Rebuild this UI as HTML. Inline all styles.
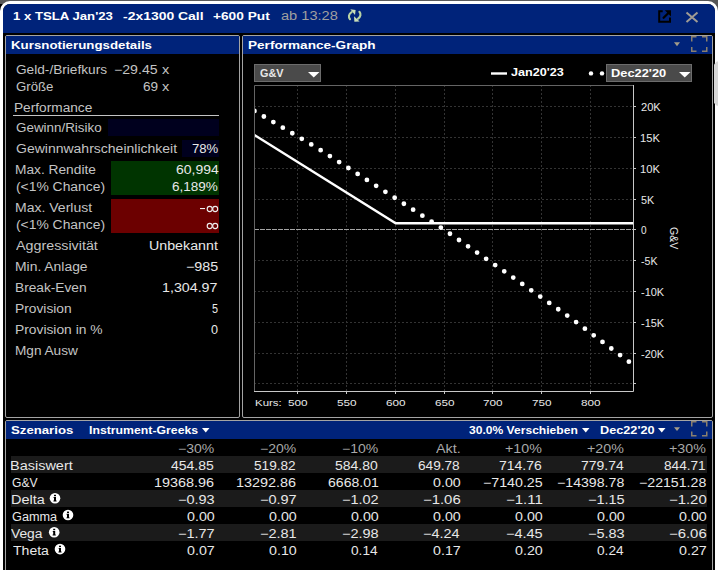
<!DOCTYPE html>
<html><head><meta charset="utf-8">
<style>
html,body{margin:0;padding:0;width:718px;height:570px;overflow:hidden;background:#000;}
.a{position:absolute;box-sizing:border-box;}
.t{position:absolute;white-space:pre;transform-origin:0 0;}
.panel{position:absolute;box-sizing:border-box;border:1px solid #a4a4a4;border-radius:2px;background:#000;}
.hdr{position:absolute;left:0;top:0;right:0;height:18px;background:#00237a;}
</style></head><body>
<div class=a style="left:0;top:0;width:718px;height:4px;background:#5a5a5a"></div>
<div class=a style="left:704px;top:0;width:14px;height:14px;background:#555"></div>
<div class=a style="left:0;top:1px;width:718px;height:620px;border:3px solid #fff;border-radius:10px 10px 0 0;background:#000"></div>
<div class=a style="left:3px;top:4px;width:712px;height:29px;background:#00237a;border-radius:7px 7px 0 0"></div>

<!-- panels -->
<div class=panel style="left:5px;top:35px;width:235px;height:383px"><div class=hdr></div></div>
<div class=panel style="left:242px;top:35px;width:471px;height:383px"><div class=hdr></div></div>
<div class=panel style="left:5px;top:420px;width:708px;height:200px"><div class=hdr></div></div>

<!-- left panel boxes -->
<div class=a style="left:13px;top:115px;width:206px;height:1px;background:#c4c4c4"></div>
<div class=a style="left:108px;top:119px;width:111px;height:17px;background:#00001e"></div>
<div class=a style="left:182px;top:140px;width:37px;height:17px;background:#00001e"></div>
<div class=a style="left:111px;top:161px;width:108px;height:34px;background:#003400"></div>
<div class=a style="left:111px;top:199px;width:108px;height:34px;background:#6c0000"></div>

<!-- dropdowns -->
<div class=a style="left:254px;top:64px;width:67px;height:18px;background:#4a4a4a;border:1px solid #6c6c6c"></div>
<div class=a style="left:606px;top:64px;width:86px;height:18px;background:#4a4a4a;border:1px solid #6c6c6c"></div>

<!-- table stripes -->
<div class=a style="left:11px;top:456px;width:696px;height:17px;background:#1b1b1b"></div>
<div class=a style="left:11px;top:490px;width:696px;height:17px;background:#1b1b1b"></div>
<div class=a style="left:11px;top:524px;width:696px;height:17px;background:#1b1b1b"></div>

<div class=a style="left:84px;top:438px;width:126px;height:1px;background:#00237a"></div>
<!-- resize grip -->


<svg class=a style="left:0;top:0" width="718" height="570" viewBox="0 0 718 570">
<defs><clipPath id="pc"><rect x="255" y="86" width="378" height="305"/></clipPath></defs>
<g stroke="#333333" stroke-width="1" stroke-dasharray="2 2" fill="none">
<path d="M297.5 85V391M346.5 85V391M395.5 85V391M444.5 85V391M492.5 85V391M541.5 85V391M590.5 85V391"/>
<path d="M254 106.5H633M254 137.5H633M254 168.5H633M254 199.5H633M254 260.5H633M254 291.5H633M254 322.5H633M254 353.5H633M254 383.5H633"/>
</g>
<path d="M254 229.5H633" stroke="#a4a4a4" stroke-width="1" stroke-dasharray="5 1"/>
<path d="M254.5 391V85.5H633" stroke="#646464" stroke-width="1" fill="none"/>
<path d="M633.5 85V391.5H254" stroke="#c8c8c8" stroke-width="1" fill="none"/>
<g stroke="#c8c8c8" stroke-width="1">
<path d="M634 106.5h2M634 137.5h2M634 168.5h2M634 199.5h2M634 229.5h2M634 260.5h2M634 291.5h2M634 322.5h2M634 353.5h2M634 383.5h2"/>
<path d="M297.5 392v2M346.5 392v2M395.5 392v2M444.5 392v2M492.5 392v2M541.5 392v2M590.5 392v2"/>
</g>
<g clip-path="url(#pc)">
<polyline points="254,134.7 395.7,223.3 634,223.3" stroke="#fff" stroke-width="2.4" fill="none"/>
<polyline points="254.4,110.9 316.9,147.75 380.3,188.5 443.8,229.5 507.25,273.4 570.7,318.05 634.2,365.7" stroke="#fff" stroke-width="4.8" stroke-linecap="round" stroke-dasharray="0 11" fill="none"/>
</g>
<polygon points="714,64.5 716.8,61.6 718,61.6 718,105.8 716.8,105.8 714,103" fill="#d8d8d8"/>
<!-- legend -->
<rect x="491" y="72.3" width="16" height="2.4" fill="#fff"/>
<circle cx="591" cy="73.4" r="2.2" fill="#fff"/>
<circle cx="602" cy="73.4" r="2.2" fill="#fff"/>
<!-- dropdown triangles -->
<polygon points="308,72 319.5,72 313.75,77.5" fill="#fff"/>
<polygon points="679,72 690.5,72 684.75,77.5" fill="#fff"/>
<!-- header icons right panel -->
<polygon points="674,42.3 680,42.3 677,46.2" fill="#a39c8a"/>
<path d="M691.75 41.5V36.75H696.5M702 36.75H706.75V41.5M706.75 47V51.25H702M696.5 51.25H691.75V47" stroke="#8a806e" stroke-width="1.5" fill="none"/>
<!-- bottom header icons -->
<polygon points="202,428 209.5,428 205.75,432.5" fill="#fff"/>
<polygon points="582,428 589.5,428 585.75,432.5" fill="#fff"/>
<polygon points="658,428 665.5,428 661.75,432.5" fill="#fff"/>
<polygon points="674,427.3 680,427.3 677,431" fill="#a39c8a"/>
<path d="M691.75 426.5V421.75H696.5M702 421.75H706.75V426.5M706.75 431.5V435.75H702M696.5 435.75H691.75V431.5" stroke="#8a806e" stroke-width="1.5" fill="none"/>
<!-- title icons -->
<path d="M686.5 12.5L697.5 22M697.5 12.5L686.5 22" stroke="#a09c94" stroke-width="2"/>
<path d="M662.7 11.2H659.2V21.8H670V17.5" stroke="#000" stroke-width="2" fill="none"/>
<polygon points="664.8,10.2 671,10.2 671,16.4" fill="#000"/>
<path d="M663.6 17.8L668.2 13.2" stroke="#000" stroke-width="2.3" stroke-linecap="round"/>
<!-- refresh -->
<g fill="none" stroke="#b8d2a4" stroke-width="2.1" stroke-linecap="round">
<path d="M350 19.2C348.3 17.2 348.4 14.2 351.6 12.2"/>
<path d="M359.4 11.8C361.1 13.8 361 16.8 357.8 18.8"/>
</g>
<polygon points="350.3,9.3 355.6,10 355,15" fill="#c8ddb8"/>
<polygon points="354,16.2 354.4,21.7 359.6,21.6" fill="#c8ddb8"/>
<!-- infinity -->
<rect x="200" y="208" width="5" height="1.1" fill="#eee"/>
<g fill="none" stroke="#eee" stroke-width="1.1">
<ellipse cx="209.7" cy="209" rx="2.5" ry="2.6"/><ellipse cx="215.2" cy="209" rx="2.5" ry="2.6"/>
<ellipse cx="209.7" cy="226" rx="2.5" ry="2.6"/><ellipse cx="215.2" cy="226" rx="2.5" ry="2.6"/>
</g>
<!-- info icons -->
<g fill="#fff">
<circle cx="55" cy="498.2" r="5.3"/><circle cx="68" cy="515" r="5.3"/><circle cx="54.2" cy="532.2" r="5.3"/><circle cx="60" cy="549.1" r="5.3"/>
</g>
<g fill="#000">
<rect x="54" y="494.8" width="2" height="1.4"/><path d="M53.6 497H56V500.6H56.6V501.5H53.4V500.6H54V497.9H53.6Z"/>
<rect x="67" y="511.6" width="2" height="1.4"/><path d="M66.6 513.8H69V517.4H69.6V518.3H66.4V517.4H67V514.7H66.6Z"/>
<rect x="53.2" y="528.8" width="2" height="1.4"/><path d="M52.8 531H55.2V534.6H55.8V535.5H52.6V534.6H53.2V531.9H52.8Z"/>
<rect x="59" y="545.7" width="2" height="1.4"/><path d="M58.6 547.9H61V551.5H61.6V552.4H58.4V551.5H59V548.8H58.6Z"/>
</g>
</svg>
<div class=t style='left:12.90px;top:11px;font:700 11px/11px "Liberation Sans",sans-serif;color:#ffffff;transform:scaleX(1.1964)'>1 x TSLA Jan&#x27;23</div>
<div class=t style='left:123.00px;top:11px;font:700 11px/11px "Liberation Sans",sans-serif;color:#ffffff;transform:scaleX(1.2667)'>-2x1300 Call</div>
<div class=t style='left:212.70px;top:11px;font:700 11px/11px "Liberation Sans",sans-serif;color:#ffffff;transform:scaleX(1.2457)'>+600 Put</div>
<div class=t style='left:280.80px;top:10px;font:400 12px/12px "Liberation Sans",sans-serif;color:#a0a0a0;transform:scaleX(1.2170)'>ab 13:28</div>
<div class=t style='left:10.90px;top:40px;font:700 11px/11px "Liberation Sans",sans-serif;color:#ffffff;transform:scaleX(1.2077)'>Kursnotierungsdetails</div>
<div class=t style='left:248.00px;top:40px;font:700 11px/11px "Liberation Sans",sans-serif;color:#ffffff;transform:scaleX(1.2350)'>Performance-Graph</div>
<div class=t style='left:10.90px;top:425px;font:700 11px/11px "Liberation Sans",sans-serif;color:#ffffff;transform:scaleX(1.1981)'>Szenarios</div>
<div class=t style='left:88.90px;top:426px;font:700 10px/10px "Liberation Sans",sans-serif;color:#ffffff;transform:scaleX(1.2270)'>Instrument-Greeks</div>
<div class=t style='left:469.00px;top:426px;font:700 10px/10px "Liberation Sans",sans-serif;color:#ffffff;transform:scaleX(1.2078)'>30.0% Verschieben</div>
<div class=t style='left:599.70px;top:426px;font:700 10px/10px "Liberation Sans",sans-serif;color:#ffffff;transform:scaleX(1.2698)'>Dec22&#x27;20</div>
<div class=t style='left:16.00px;top:64px;font:400 12px/12px "Liberation Sans",sans-serif;color:#c4c4c4;transform:scaleX(1.1375)'>Geld-/Briefkurs</div>
<div class=t style='left:113.82px;top:64px;font:400 12px/12px "Liberation Sans",sans-serif;color:#c4c4c4;transform:scaleX(1.1778)'>−29.45</div>
<div class=t style='left:162.40px;top:64px;font:400 12px/12px "Liberation Sans",sans-serif;color:#c4c4c4;transform:scaleX(1.2133)'>x</div>
<div class=t style='left:16.00px;top:81px;font:400 12px/12px "Liberation Sans",sans-serif;color:#c4c4c4;transform:scaleX(1.1012)'>Größe</div>
<div class=t style='left:142.70px;top:81px;font:400 12px/12px "Liberation Sans",sans-serif;color:#c4c4c4;transform:scaleX(1.1308)'>69</div>
<div class=t style='left:162.40px;top:81px;font:400 12px/12px "Liberation Sans",sans-serif;color:#c4c4c4;transform:scaleX(1.2133)'>x</div>
<div class=t style='left:14.16px;top:102px;font:400 12px/12px "Liberation Sans",sans-serif;color:#c4c4c4;transform:scaleX(1.1397)'>Performance</div>
<div class=t style='left:16.00px;top:122px;font:400 12px/12px "Liberation Sans",sans-serif;color:#c4c4c4;transform:scaleX(1.1169)'>Gewinn/Risiko</div>
<div class=t style='left:16.00px;top:143px;font:400 12px/12px "Liberation Sans",sans-serif;color:#c4c4c4;transform:scaleX(1.1667)'>Gewinnwahrscheinlichkeit</div>
<div class=t style='left:191.75px;top:143px;font:400 12px/12px "Liberation Sans",sans-serif;color:#e8e8e8;transform:scaleX(1.0938)'>78%</div>
<div class=t style='left:14.86px;top:164px;font:400 12px/12px "Liberation Sans",sans-serif;color:#c4c4c4;transform:scaleX(1.1440)'>Max. Rendite</div>
<div class=t style='left:16.00px;top:181px;font:400 12px/12px "Liberation Sans",sans-serif;color:#c4c4c4;transform:scaleX(1.1558)'>(&lt;1% Chance)</div>
<div class=t style='left:175.55px;top:164px;font:400 12px/12px "Liberation Sans",sans-serif;color:#e8e8e8;transform:scaleX(1.1635)'>60,994</div>
<div class=t style='left:172.10px;top:181px;font:400 12px/12px "Liberation Sans",sans-serif;color:#e8e8e8;transform:scaleX(1.1268)'>6,189%</div>
<div class=t style='left:14.83px;top:202px;font:400 12px/12px "Liberation Sans",sans-serif;color:#c4c4c4;transform:scaleX(1.1680)'>Max. Verlust</div>
<div class=t style='left:16.00px;top:219px;font:400 12px/12px "Liberation Sans",sans-serif;color:#c4c4c4;transform:scaleX(1.1558)'>(&lt;1% Chance)</div>
<div class=t style='left:16.10px;top:240px;font:400 12px/12px "Liberation Sans",sans-serif;color:#c4c4c4;transform:scaleX(1.1907)'>Aggressivität</div>
<div class=t style='left:149.21px;top:240px;font:400 12px/12px "Liberation Sans",sans-serif;color:#e8e8e8;transform:scaleX(1.1860)'>Unbekannt</div>
<div class=t style='left:14.94px;top:261px;font:400 12px/12px "Liberation Sans",sans-serif;color:#c4c4c4;transform:scaleX(1.1574)'>Min. Anlage</div>
<div class=t style='left:185.81px;top:261px;font:400 12px/12px "Liberation Sans",sans-serif;color:#e8e8e8;transform:scaleX(1.1923)'>−985</div>
<div class=t style='left:14.96px;top:282px;font:400 12px/12px "Liberation Sans",sans-serif;color:#c4c4c4;transform:scaleX(1.1423)'>Break-Even</div>
<div class=t style='left:162.21px;top:282px;font:400 12px/12px "Liberation Sans",sans-serif;color:#e8e8e8;transform:scaleX(1.1870)'>1,304.97</div>
<div class=t style='left:14.95px;top:303px;font:400 12px/12px "Liberation Sans",sans-serif;color:#c4c4c4;transform:scaleX(1.1483)'>Provision</div>
<div class=t style='left:211.70px;top:303px;font:400 12px/12px "Liberation Sans",sans-serif;color:#e8e8e8;transform:scaleX(0.9000)'>5</div>
<div class=t style='left:14.95px;top:324px;font:400 12px/12px "Liberation Sans",sans-serif;color:#c4c4c4;transform:scaleX(1.1509)'>Provision in %</div>
<div class=t style='left:210.65px;top:324px;font:400 12px/12px "Liberation Sans",sans-serif;color:#e8e8e8;transform:scaleX(1.0500)'>0</div>
<div class=t style='left:14.97px;top:345px;font:400 12px/12px "Liberation Sans",sans-serif;color:#c4c4c4;transform:scaleX(1.1345)'>Mgn Ausw</div>
<div class=t style='left:259.60px;top:69px;font:700 10px/10px "Liberation Sans",sans-serif;color:#e8e8e8;transform:scaleX(1.0818)'>G&amp;V</div>
<div class=t style='left:511.00px;top:68px;font:700 10px/10px "Liberation Sans",sans-serif;color:#ffffff;transform:scaleX(1.2619)'>Jan20&#x27;23</div>
<div class=t style='left:611.40px;top:69px;font:700 10px/10px "Liberation Sans",sans-serif;color:#ffffff;transform:scaleX(1.2837)'>Dec22&#x27;20</div>
<div class=t style='left:640.90px;top:103px;font:400 10px/10px "Liberation Sans",sans-serif;color:#e8e8e8;transform:scaleX(1.1111)'>20K</div>
<div class=t style='left:639.78px;top:134px;font:400 10px/10px "Liberation Sans",sans-serif;color:#e8e8e8;transform:scaleX(1.1176)'>15K</div>
<div class=t style='left:639.78px;top:165px;font:400 10px/10px "Liberation Sans",sans-serif;color:#e8e8e8;transform:scaleX(1.1176)'>10K</div>
<div class=t style='left:640.90px;top:196px;font:400 10px/10px "Liberation Sans",sans-serif;color:#e8e8e8;transform:scaleX(1.0833)'>5K</div>
<div class=t style='left:640.90px;top:226px;font:400 10px/10px "Liberation Sans",sans-serif;color:#e8e8e8;transform:scaleX(1.0000)'>0</div>
<div class=t style='left:640.90px;top:257px;font:400 10px/10px "Liberation Sans",sans-serif;color:#e8e8e8;transform:scaleX(1.0625)'>-5K</div>
<div class=t style='left:640.90px;top:288px;font:400 10px/10px "Liberation Sans",sans-serif;color:#e8e8e8;transform:scaleX(1.0952)'>-10K</div>
<div class=t style='left:640.90px;top:319px;font:400 10px/10px "Liberation Sans",sans-serif;color:#e8e8e8;transform:scaleX(1.0952)'>-15K</div>
<div class=t style='left:640.90px;top:350px;font:400 10px/10px "Liberation Sans",sans-serif;color:#e8e8e8;transform:scaleX(1.0952)'>-20K</div>
<div class=t style='left:679.00px;top:227.00px;font:400 11px/11px "Liberation Sans",sans-serif;color:#e8e8e8;transform:rotate(90deg) scaleX(0.9583)'>G&amp;V</div>
<div class=t style='left:254.60px;top:399px;font:400 9px/9px "Liberation Sans",sans-serif;color:#e8e8e8;transform:scaleX(1.2714)'>Kurs:</div>
<div class=t style='left:287.60px;top:399px;font:400 9px/9px "Liberation Sans",sans-serif;color:#e8e8e8;transform:scaleX(1.3067)'>500</div>
<div class=t style='left:336.60px;top:399px;font:400 9px/9px "Liberation Sans",sans-serif;color:#e8e8e8;transform:scaleX(1.3067)'>550</div>
<div class=t style='left:385.60px;top:399px;font:400 9px/9px "Liberation Sans",sans-serif;color:#e8e8e8;transform:scaleX(1.3067)'>600</div>
<div class=t style='left:434.60px;top:399px;font:400 9px/9px "Liberation Sans",sans-serif;color:#e8e8e8;transform:scaleX(1.3067)'>650</div>
<div class=t style='left:482.60px;top:399px;font:400 9px/9px "Liberation Sans",sans-serif;color:#e8e8e8;transform:scaleX(1.3067)'>700</div>
<div class=t style='left:531.60px;top:399px;font:400 9px/9px "Liberation Sans",sans-serif;color:#e8e8e8;transform:scaleX(1.3067)'>750</div>
<div class=t style='left:580.60px;top:399px;font:400 9px/9px "Liberation Sans",sans-serif;color:#e8e8e8;transform:scaleX(1.3067)'>800</div>
<div class=t style='left:177.83px;top:443px;font:400 12px/12px "Liberation Sans",sans-serif;color:#a8a8a8;transform:scaleX(1.1667)'>−30%</div>
<div class=t style='left:259.83px;top:443px;font:400 12px/12px "Liberation Sans",sans-serif;color:#a8a8a8;transform:scaleX(1.1667)'>−20%</div>
<div class=t style='left:341.83px;top:443px;font:400 12px/12px "Liberation Sans",sans-serif;color:#a8a8a8;transform:scaleX(1.1667)'>−10%</div>
<div class=t style='left:436.08px;top:443px;font:400 12px/12px "Liberation Sans",sans-serif;color:#a8a8a8;transform:scaleX(1.1960)'>Akt.</div>
<div class=t style='left:505.25px;top:443px;font:400 12px/12px "Liberation Sans",sans-serif;color:#a8a8a8;transform:scaleX(1.1855)'>+10%</div>
<div class=t style='left:587.25px;top:443px;font:400 12px/12px "Liberation Sans",sans-serif;color:#a8a8a8;transform:scaleX(1.1855)'>+20%</div>
<div class=t style='left:669.25px;top:443px;font:400 12px/12px "Liberation Sans",sans-serif;color:#a8a8a8;transform:scaleX(1.1855)'>+30%</div>
<div class=t style='left:10.49px;top:460px;font:400 12px/12px "Liberation Sans",sans-serif;color:#e8e8e8;transform:scaleX(1.2059)'>Basiswert</div>
<div class=t style='left:170.95px;top:460px;font:400 12px/12px "Liberation Sans",sans-serif;color:#e8e8e8;transform:scaleX(1.1635)'>454.85</div>
<div class=t style='left:254.00px;top:460px;font:400 12px/12px "Liberation Sans",sans-serif;color:#e8e8e8;transform:scaleX(1.1351)'>519.82</div>
<div class=t style='left:334.95px;top:460px;font:400 12px/12px "Liberation Sans",sans-serif;color:#e8e8e8;transform:scaleX(1.1635)'>584.80</div>
<div class=t style='left:418.00px;top:460px;font:400 12px/12px "Liberation Sans",sans-serif;color:#e8e8e8;transform:scaleX(1.1351)'>649.78</div>
<div class=t style='left:498.95px;top:460px;font:400 12px/12px "Liberation Sans",sans-serif;color:#e8e8e8;transform:scaleX(1.1635)'>714.76</div>
<div class=t style='left:580.95px;top:460px;font:400 12px/12px "Liberation Sans",sans-serif;color:#e8e8e8;transform:scaleX(1.1635)'>779.74</div>
<div class=t style='left:664.00px;top:460px;font:400 12px/12px "Liberation Sans",sans-serif;color:#e8e8e8;transform:scaleX(1.1351)'>844.71</div>
<div class=t style='left:11.70px;top:477px;font:400 12px/12px "Liberation Sans",sans-serif;color:#e8e8e8;transform:scaleX(1.0077)'>G&amp;V</div>
<div class=t style='left:154.00px;top:477px;font:400 12px/12px "Liberation Sans",sans-serif;color:#e8e8e8;transform:scaleX(1.2000)'>19368.96</div>
<div class=t style='left:236.00px;top:477px;font:400 12px/12px "Liberation Sans",sans-serif;color:#e8e8e8;transform:scaleX(1.2000)'>13292.86</div>
<div class=t style='left:327.60px;top:477px;font:400 12px/12px "Liberation Sans",sans-serif;color:#e8e8e8;transform:scaleX(1.1721)'>6668.01</div>
<div class=t style='left:432.70px;top:477px;font:400 12px/12px "Liberation Sans",sans-serif;color:#e8e8e8;transform:scaleX(1.1870)'>0.00</div>
<div class=t style='left:482.82px;top:477px;font:400 12px/12px "Liberation Sans",sans-serif;color:#e8e8e8;transform:scaleX(1.1837)'>−7140.25</div>
<div class=t style='left:556.82px;top:477px;font:400 12px/12px "Liberation Sans",sans-serif;color:#e8e8e8;transform:scaleX(1.1786)'>−14398.78</div>
<div class=t style='left:638.82px;top:477px;font:400 12px/12px "Liberation Sans",sans-serif;color:#e8e8e8;transform:scaleX(1.1786)'>−22151.28</div>
<div class=t style='left:10.50px;top:494px;font:400 12px/12px "Liberation Sans",sans-serif;color:#e8e8e8;transform:scaleX(1.2037)'>Delta</div>
<div class=t style='left:177.79px;top:494px;font:400 12px/12px "Liberation Sans",sans-serif;color:#e8e8e8;transform:scaleX(1.2069)'>−0.93</div>
<div class=t style='left:259.79px;top:494px;font:400 12px/12px "Liberation Sans",sans-serif;color:#e8e8e8;transform:scaleX(1.2069)'>−0.97</div>
<div class=t style='left:341.79px;top:494px;font:400 12px/12px "Liberation Sans",sans-serif;color:#e8e8e8;transform:scaleX(1.2069)'>−1.02</div>
<div class=t style='left:422.76px;top:494px;font:400 12px/12px "Liberation Sans",sans-serif;color:#e8e8e8;transform:scaleX(1.2414)'>−1.06</div>
<div class=t style='left:505.75px;top:494px;font:400 12px/12px "Liberation Sans",sans-serif;color:#e8e8e8;transform:scaleX(1.2500)'>−1.11</div>
<div class=t style='left:587.79px;top:494px;font:400 12px/12px "Liberation Sans",sans-serif;color:#e8e8e8;transform:scaleX(1.2069)'>−1.15</div>
<div class=t style='left:668.76px;top:494px;font:400 12px/12px "Liberation Sans",sans-serif;color:#e8e8e8;transform:scaleX(1.2414)'>−1.20</div>
<div class=t style='left:11.70px;top:511px;font:400 12px/12px "Liberation Sans",sans-serif;color:#e8e8e8;transform:scaleX(1.0581)'>Gamma</div>
<div class=t style='left:186.70px;top:511px;font:400 12px/12px "Liberation Sans",sans-serif;color:#e8e8e8;transform:scaleX(1.1870)'>0.00</div>
<div class=t style='left:268.70px;top:511px;font:400 12px/12px "Liberation Sans",sans-serif;color:#e8e8e8;transform:scaleX(1.1870)'>0.00</div>
<div class=t style='left:350.70px;top:511px;font:400 12px/12px "Liberation Sans",sans-serif;color:#e8e8e8;transform:scaleX(1.1870)'>0.00</div>
<div class=t style='left:432.70px;top:511px;font:400 12px/12px "Liberation Sans",sans-serif;color:#e8e8e8;transform:scaleX(1.1870)'>0.00</div>
<div class=t style='left:514.70px;top:511px;font:400 12px/12px "Liberation Sans",sans-serif;color:#e8e8e8;transform:scaleX(1.1870)'>0.00</div>
<div class=t style='left:596.70px;top:511px;font:400 12px/12px "Liberation Sans",sans-serif;color:#e8e8e8;transform:scaleX(1.1870)'>0.00</div>
<div class=t style='left:678.70px;top:511px;font:400 12px/12px "Liberation Sans",sans-serif;color:#e8e8e8;transform:scaleX(1.1870)'>0.00</div>
<div class=t style='left:11.40px;top:528px;font:400 12px/12px "Liberation Sans",sans-serif;color:#e8e8e8;transform:scaleX(1.1500)'>Vega</div>
<div class=t style='left:177.79px;top:528px;font:400 12px/12px "Liberation Sans",sans-serif;color:#e8e8e8;transform:scaleX(1.2069)'>−1.77</div>
<div class=t style='left:259.79px;top:528px;font:400 12px/12px "Liberation Sans",sans-serif;color:#e8e8e8;transform:scaleX(1.2069)'>−2.81</div>
<div class=t style='left:341.79px;top:528px;font:400 12px/12px "Liberation Sans",sans-serif;color:#e8e8e8;transform:scaleX(1.2069)'>−2.98</div>
<div class=t style='left:422.80px;top:528px;font:400 12px/12px "Liberation Sans",sans-serif;color:#e8e8e8;transform:scaleX(1.2000)'>−4.24</div>
<div class=t style='left:505.79px;top:528px;font:400 12px/12px "Liberation Sans",sans-serif;color:#e8e8e8;transform:scaleX(1.2069)'>−4.45</div>
<div class=t style='left:587.79px;top:528px;font:400 12px/12px "Liberation Sans",sans-serif;color:#e8e8e8;transform:scaleX(1.2069)'>−5.83</div>
<div class=t style='left:668.76px;top:528px;font:400 12px/12px "Liberation Sans",sans-serif;color:#e8e8e8;transform:scaleX(1.2414)'>−6.06</div>
<div class=t style='left:12.90px;top:545px;font:400 12px/12px "Liberation Sans",sans-serif;color:#e8e8e8;transform:scaleX(1.1710)'>Theta</div>
<div class=t style='left:186.70px;top:545px;font:400 12px/12px "Liberation Sans",sans-serif;color:#e8e8e8;transform:scaleX(1.1870)'>0.07</div>
<div class=t style='left:268.70px;top:545px;font:400 12px/12px "Liberation Sans",sans-serif;color:#e8e8e8;transform:scaleX(1.1870)'>0.10</div>
<div class=t style='left:350.70px;top:545px;font:400 12px/12px "Liberation Sans",sans-serif;color:#e8e8e8;transform:scaleX(1.1375)'>0.14</div>
<div class=t style='left:432.70px;top:545px;font:400 12px/12px "Liberation Sans",sans-serif;color:#e8e8e8;transform:scaleX(1.1870)'>0.17</div>
<div class=t style='left:514.70px;top:545px;font:400 12px/12px "Liberation Sans",sans-serif;color:#e8e8e8;transform:scaleX(1.1870)'>0.20</div>
<div class=t style='left:596.70px;top:545px;font:400 12px/12px "Liberation Sans",sans-serif;color:#e8e8e8;transform:scaleX(1.1375)'>0.24</div>
<div class=t style='left:678.70px;top:545px;font:400 12px/12px "Liberation Sans",sans-serif;color:#e8e8e8;transform:scaleX(1.1870)'>0.27</div>
</body></html>
